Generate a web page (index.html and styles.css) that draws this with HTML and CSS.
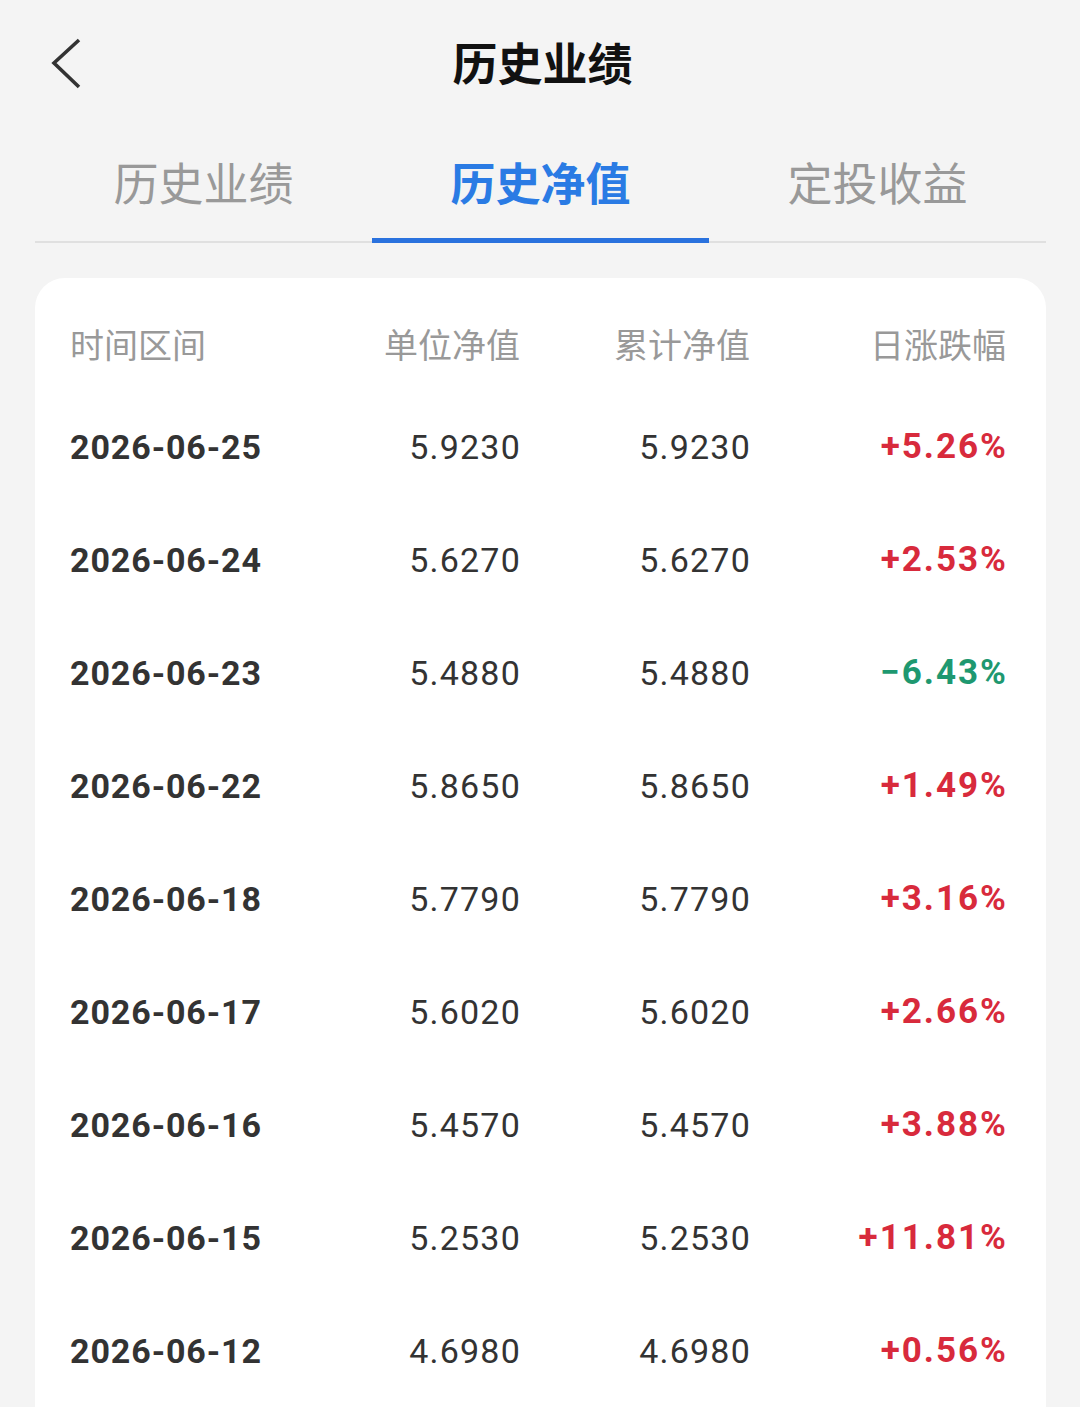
FILE: index.html
```html
<!DOCTYPE html>
<html lang="zh-CN">
<head>
<meta charset="utf-8">
<title>历史业绩</title>
<link rel="stylesheet" href="styles.css">
</head>
<body>
<div class="page">
  <header class="topbar">
    <svg class="back" width="40" height="60" viewBox="0 0 40 60" aria-hidden="true">
      <polyline points="28,9 3,32 28,56" fill="none" stroke="#333" stroke-width="3.6" stroke-linejoin="miter"/>
    </svg>
    <h1 class="title">历史业绩</h1>
  </header>
  <nav class="tabs">
    <div class="tab">历史业绩</div>
    <div class="tab active">历史净值</div>
    <div class="tab">定投收益</div>
  </nav>
  <section class="card">
    <div class="row head">
      <div class="c1">时间区间</div>
      <div class="c2">单位净值</div>
      <div class="c3">累计净值</div>
      <div class="c4">日涨跌幅</div>
    </div>
    <div class="row"><div class="c1 date">2026-06-25</div><div class="c2 num">5.9230</div><div class="c3 num">5.9230</div><div class="c4 pct up">+5.26%</div></div>
    <div class="row"><div class="c1 date">2026-06-24</div><div class="c2 num">5.6270</div><div class="c3 num">5.6270</div><div class="c4 pct up">+2.53%</div></div>
    <div class="row"><div class="c1 date">2026-06-23</div><div class="c2 num">5.4880</div><div class="c3 num">5.4880</div><div class="c4 pct down">−6.43%</div></div>
    <div class="row"><div class="c1 date">2026-06-22</div><div class="c2 num">5.8650</div><div class="c3 num">5.8650</div><div class="c4 pct up">+1.49%</div></div>
    <div class="row"><div class="c1 date">2026-06-18</div><div class="c2 num">5.7790</div><div class="c3 num">5.7790</div><div class="c4 pct up">+3.16%</div></div>
    <div class="row"><div class="c1 date">2026-06-17</div><div class="c2 num">5.6020</div><div class="c3 num">5.6020</div><div class="c4 pct up">+2.66%</div></div>
    <div class="row"><div class="c1 date">2026-06-16</div><div class="c2 num">5.4570</div><div class="c3 num">5.4570</div><div class="c4 pct up">+3.88%</div></div>
    <div class="row"><div class="c1 date">2026-06-15</div><div class="c2 num">5.2530</div><div class="c3 num">5.2530</div><div class="c4 pct up">+11.81%</div></div>
    <div class="row"><div class="c1 date">2026-06-12</div><div class="c2 num">4.6980</div><div class="c3 num">4.6980</div><div class="c4 pct up">+0.56%</div></div>
  </section>
</div>
</body>
</html>
```

FILE: styles.css
```css
html, body {
  margin: 0;
  padding: 0;
  background: #f4f4f4;
}
body {
  font-family: Roboto, "Noto Sans CJK SC", "Noto Sans", sans-serif;
  color: #333;
}
.page {
  padding: 0 34px 0 35px;
}
.topbar {
  height: 124px;
  display: flex;
  align-items: center;
  justify-content: center;
  position: relative;
}
.back {
  position: absolute;
  left: 16px;
  top: 31px;
}
.title {
  margin: -2px 0 0 4px;
  font-family: "Noto Sans CJK SC", sans-serif;
  font-size: 45px;
  font-weight: 700;
  color: #111;
  line-height: 1;
}
.tabs {
  display: grid;
  grid-template-columns: repeat(3, 1fr);
  height: 117px;
  border-bottom: 2px solid #e0e0e0;
}
.tab {
  display: flex;
  align-items: center;
  justify-content: center;
  font-family: "Noto Sans CJK SC", sans-serif;
  font-size: 45px;
  color: #999;
  padding-bottom: 2px;
  position: relative;
}
.tab.active {
  color: #2a7be4;
  font-weight: 700;
}
.tab.active::after {
  content: "";
  position: absolute;
  left: 0;
  right: 0;
  bottom: -2px;
  height: 5px;
  background: #2a72de;
}
.card {
  margin-top: 35px;
  background: #fff;
  border-radius: 30px 30px 0 0;
  padding: 19px 40px 0 35px;
}
.row {
  display: grid;
  grid-template-columns: 230px 220px 230px 256px;
  align-items: center;
  height: 113px;
}
.row.head {
  height: 93px;
  font-family: "Noto Sans CJK SC", sans-serif;
  font-size: 34px;
  color: #999;
}
.c2, .c3, .c4 {
  text-align: right;
}
.date {
  font-size: 34px;
  font-weight: 700;
  letter-spacing: 0.9px;
  color: #333;
}
.num {
  font-size: 34px;
  letter-spacing: 1.2px;
  color: #333;
}
.c2.num, .c3.num {
  margin-right: -1px;
}
.pct {
  font-size: 35px;
  font-weight: 700;
  letter-spacing: 2px;
}
.c4.pct { margin-right: -2px; }
.up { color: #d82a3c; }
.down { color: #1e9870; }
```
